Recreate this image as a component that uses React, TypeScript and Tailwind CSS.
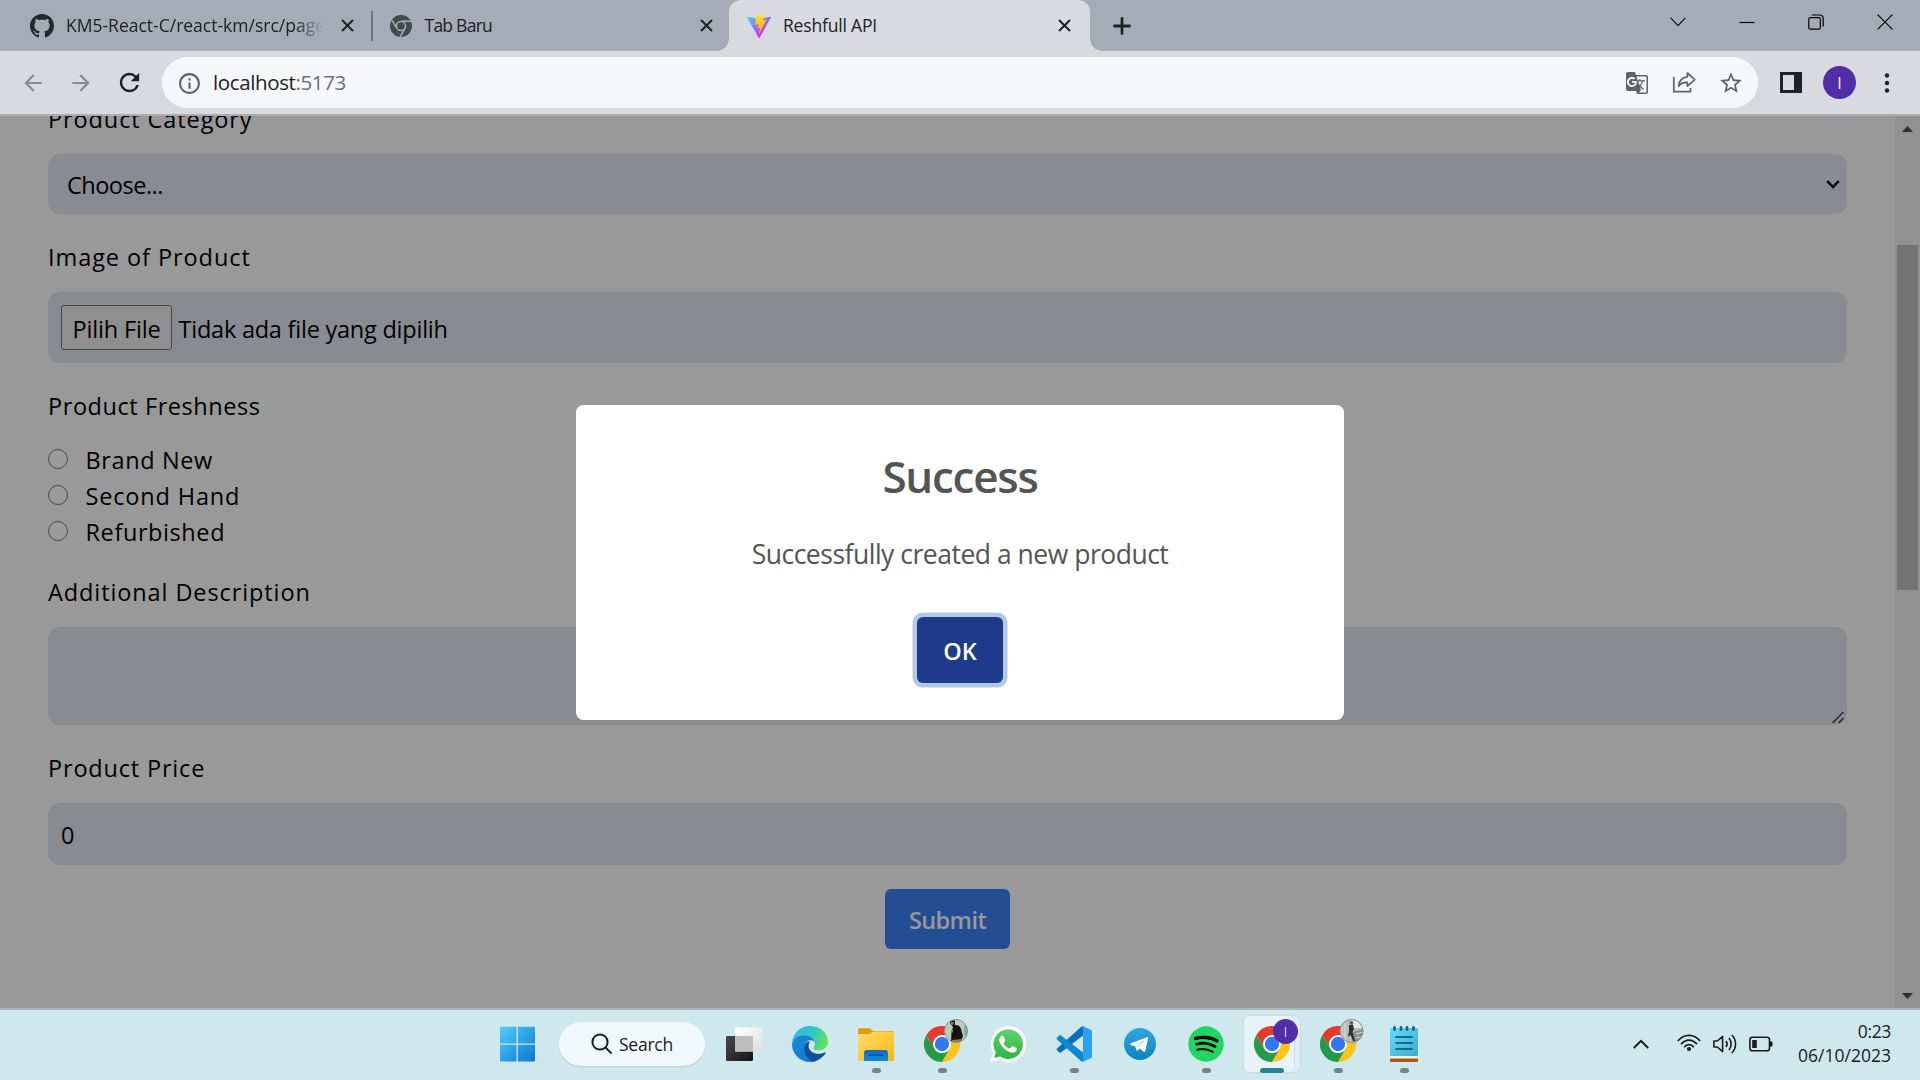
import React from "react";
import { MdArrowBack, MdArrowForward, MdRefresh, MdInfoOutline, MdGTranslate, MdStarOutline } from "react-icons/md";

function GitHubMark() {
  return (
    <svg className="shrink-0" width="24" height="24" viewBox="0 0 16 16" fill="#24292f">
      <path d="M8 0C3.58 0 0 3.58 0 8c0 3.54 2.29 6.53 5.47 7.59.4.07.55-.17.55-.38 0-.19-.01-.82-.01-1.49-2.01.37-2.53-.49-2.69-.94-.09-.23-.48-.94-.82-1.13-.28-.15-.68-.52-.01-.53.63-.01 1.08.58 1.23.82.72 1.21 1.87.87 2.33.66.07-.52.28-.87.51-1.07-1.78-.2-3.64-.89-3.64-3.95 0-.87.31-1.59.82-2.15-.08-.2-.36-1.02.08-2.12 0 0 .67-.21 2.2.82.64-.18 1.32-.27 2-.27s1.36.09 2 .27c1.53-1.04 2.2-.82 2.2-.82.44 1.1.16 1.92.08 2.12.51.56.82 1.27.82 2.15 0 3.07-1.87 3.75-3.65 3.95.29.25.54.73.54 1.48 0 1.07-.01 1.93-.01 2.2 0 .21.15.46.55.38A8.01 8.01 0 0 0 16 8c0-4.42-3.58-8-8-8Z" />
    </svg>
  );
}

function TabClose({ className = "" }: { className?: string }) {
  return (
    <svg className={`shrink-0 ${className}`} width="13" height="13" viewBox="0 0 13 13" fill="none" stroke="#202124" strokeWidth="2.1">
      <path d="M1 1L12 12M12 1L1 12" />
    </svg>
  );
}

function GreyChrome() {
  return (
    <svg className="shrink-0" width="22" height="22" viewBox="0 0 22 22">
      <circle cx="11" cy="11" r="11" fill="#45484d" />
      <circle cx="11" cy="11" r="4.6" fill="none" stroke="#a7abb8" strokeWidth="1.5" />
      <path d="M11 6.2H21M6.9 13.4L1.8 4.9M15.1 13.4L10 22" stroke="#a7abb8" strokeWidth="1.5" />
    </svg>
  );
}

function ViteLogo() {
  return (
    <svg className="shrink-0" width="24" height="24" viewBox="0 0 256 257">
      <defs>
        <linearGradient id="viteA" x1="-.8%" x2="57.6%" y1="7.7%" y2="78.4%">
          <stop offset="0" stopColor="#41D1FF" />
          <stop offset="1" stopColor="#BD34FE" />
        </linearGradient>
        <linearGradient id="viteB" x1="43.4%" x2="50.3%" y1="2.2%" y2="89%">
          <stop offset="0" stopColor="#FFEA83" />
          <stop offset=".083" stopColor="#FFDD35" />
          <stop offset="1" stopColor="#FFA800" />
        </linearGradient>
      </defs>
      <path fill="url(#viteA)" d="M255.153 37.938L134.897 252.976c-2.483 4.44-8.862 4.466-11.382.048L.875 37.958c-2.746-4.814 1.371-10.646 6.827-9.67l120.385 21.517a6.537 6.537 0 0 0 2.322-.004l117.867-21.483c5.438-.991 9.574 4.796 6.877 9.62Z" />
      <path fill="url(#viteB)" d="M185.432.063L96.44 17.501a3.268 3.268 0 0 0-2.634 3.014l-5.474 92.456a3.268 3.268 0 0 0 3.997 3.378l24.777-5.718c2.318-.535 4.413 1.507 3.936 3.838l-7.361 36.047c-.495 2.426 1.782 4.5 4.151 3.78l15.304-4.649c2.372-.72 4.652 1.36 4.15 3.788l-11.698 56.621c-.732 3.542 3.979 5.473 5.943 2.437l1.313-2.028l72.516-144.72c1.215-2.423-.88-5.186-3.54-4.672l-25.505 4.922c-2.396.462-4.435-1.77-3.759-4.114l16.646-57.705c.677-2.35-1.37-4.583-3.769-4.113Z" />
    </svg>
  );
}

function TabStrip() {
  return (
    <div className="flex h-[51px] bg-[#a7abb8] text-[17.5px] text-[#202124]">
      <div className="flex w-[371px] items-center pl-[30px]">
        <GitHubMark />
        <div className="ml-[12px] w-[260px] overflow-hidden whitespace-nowrap [mask-image:linear-gradient(to_right,black_88%,transparent_99%)]">
          KM5-React-C/react-km/src/pages
        </div>
        <TabClose className="ml-[15px]" />
      </div>
      <div className="my-auto h-[30px] w-[1.5px] bg-[#6f737c]" />
      <div className="flex w-[356.5px] items-center pl-[17px]">
        <GreyChrome />
        <div className="ml-[13px] flex-1 tracking-[-0.75px]">Tab Baru</div>
        <TabClose className="mr-[16px]" />
      </div>
      <div className="relative flex w-[360.5px] items-center rounded-t-[12px] bg-[#d9dadf] pl-[18px]">
        <div className="absolute bottom-0 left-[-12px] size-3 bg-[radial-gradient(circle_at_0_0,transparent_11.5px,#d9dadf_12px)]" />
        <div className="absolute right-[-12px] bottom-0 size-3 bg-[radial-gradient(circle_at_100%_0,transparent_11.5px,#d9dadf_12px)]" />
        <ViteLogo />
        <div className="ml-[12px] flex-1 tracking-[-0.18px]">Reshfull API</div>
        <TabClose className="mr-[18.5px]" />
      </div>
      <svg className="my-auto ml-[23.5px]" width="18" height="18" viewBox="0 0 18 18" stroke="#202124" strokeWidth="2.8" strokeLinecap="round">
        <path d="M1.5 9H16.5M9 1.5V16.5" />
      </svg>
      <div className="ml-auto flex h-[43px] items-center gap-[53px] pr-[27px]">
        <svg width="16" height="10" viewBox="0 0 16 10" fill="none" stroke="#111" strokeWidth="1.2">
          <path d="M.7 .8L8 8.6L15.3 .8" />
        </svg>
        <svg width="16" height="16" viewBox="0 0 16 16" stroke="#000" strokeWidth="1.2">
          <path d="M.5 8.5H15.5" />
        </svg>
        <svg width="16" height="16" viewBox="0 0 16 16" fill="none" stroke="#000" strokeWidth="1.2">
          <rect x=".8" y="3.6" width="11.6" height="11.6" rx="1.8" />
          <path d="M3.8 1H11.5C13.8 1 15.2 2.4 15.2 4.6V12.4" />
        </svg>
        <svg width="16" height="16" viewBox="0 0 16 16" stroke="#000" strokeWidth="1.2">
          <path d="M.6 .6L15.4 15.4M15.4 .6L.6 15.4" />
        </svg>
      </div>
    </div>
  );
}

function Toolbar() {
  return (
    <div className="flex h-[65px] items-center border-b-2 border-[#acadb1] bg-[#d9dadf] pl-5">
      <MdArrowBack size={26} className="text-[#8a8b90]" />
      <MdArrowForward size={26} className="ml-[22px] text-[#8a8b90]" />
      <MdRefresh size={29} className="ml-[21px] text-[#202124]" />
      <div className="ml-[18px] flex h-[51px] w-[1596px] items-center rounded-full bg-[#f6f7f9] pl-[15px]">
        <MdInfoOutline size={25} className="mt-0.5 text-[#5f6368]" />
        <div className="ml-[11px] text-[20.5px] tracking-[-0.38px] text-[#202124]">
          localhost<span className="text-[#6b6e73]">:5173</span>
        </div>
        <div className="ml-auto flex items-center pr-[14px] text-[#5f6368]">
          <MdGTranslate size={24} />
          <svg className="ml-[23px]" width="25" height="23" viewBox="0 0 25 23" fill="none" stroke="#5f6368" strokeWidth="1.7">
            <path d="M1.8 6V20.6H18.5V17" />
            <path d="M15.4 2L22.8 8.6L15.4 15.2V11.4C11.5 11.2 8.6 12.4 6.6 15.2C7 10.4 9.6 6.5 15.4 5.8Z" strokeLinejoin="round" />
          </svg>
          <MdStarOutline size={26} className="ml-[21.5px]" />
        </div>
      </div>
      <div className="ml-[22px] h-[21px] w-[22px] border-[3px] border-r-[8px] border-[#202124]" />
      <div className="ml-[21px] flex size-[33px] items-center justify-center rounded-full bg-[#512da8] text-[16px] text-white">I</div>
      <svg className="ml-[28px]" width="6" height="20" viewBox="0 0 6 20" fill="#202124">
        <circle cx="3" cy="2.5" r="2.2" />
        <circle cx="3" cy="10" r="2.2" />
        <circle cx="3" cy="17.5" r="2.2" />
      </svg>
    </div>
  );
}

function Radio({ label, className }: { label: string; className: string }) {
  return (
    <div className="flex h-9">
      <div className="mt-[7px] size-5 rounded-full border-[1.5px] border-[#474747]" />
      <div className={`ml-[17.5px] leading-9 ${className}`}>{label}</div>
    </div>
  );
}

function ProductForm() {
  return (
    <div className="flex flex-1 flex-col px-12 text-[23.5px] text-black">
      <div className="mt-[-15px] leading-9 tracking-[0.9px]">Product Category</div>
      <div className="mt-[17px] flex h-[60px] items-center justify-between rounded-xl bg-[#888b90] pr-[7px] pl-[19px]">
        <span className="pt-[3px] tracking-[-0.5px]">Choose...</span>
        <svg width="14" height="9" viewBox="0 0 14 9" fill="none" stroke="#000" strokeWidth="2.6">
          <path d="M1.2 1.2L7 7L12.8 1.2" />
        </svg>
      </div>
      <div className="mt-[25px] leading-9 tracking-[0.93px]">Image of Product</div>
      <div className="mt-[17px] flex h-[71px] items-center rounded-xl bg-[#888b90] pl-[13px]">
        <span className="flex h-[45px] w-[111px] items-center rounded-[3px] border-[1.5px] border-[#474747] bg-[#8f8f8f] pt-1 pl-[10.5px] tracking-[-0.15px] whitespace-nowrap">
          Pilih File
        </span>
        <span className="ml-[6.5px] pt-1 tracking-[-0.23px]">Tidak ada file yang dipilih</span>
      </div>
      <div className="mt-[25px] leading-9 tracking-[0.57px]">Product Freshness</div>
      <div className="mt-[18px]">
        <Radio label="Brand New" className="tracking-[0.62px]" />
        <Radio label="Second Hand" className="tracking-[0.84px]" />
        <Radio label="Refurbished" className="tracking-[0.59px]" />
      </div>
      <div className="mt-6 leading-9 tracking-[0.9px]">Additional Description</div>
      <div className="mt-[17px] flex h-[98px] items-end justify-end rounded-xl bg-[#888b90] pr-[3px] pb-px">
        <svg width="12" height="13" viewBox="0 0 12 13" stroke="#2b2c2e" strokeWidth="1.7">
          <path d="M.6 12L11.4 1M6.6 12L11.4 7" />
        </svg>
      </div>
      <div className="mt-[25px] leading-9 tracking-[0.82px]">Product Price</div>
      <div className="mt-[17px] flex h-[62px] items-center rounded-xl bg-[#888b90] pt-1 pl-[13px]">0</div>
      <div className="mt-6 flex h-[60px] w-[125px] items-center justify-center self-center rounded-md bg-[#234e94] pt-1 font-semibold tracking-[-0.59px] text-[#999]">
        Submit
      </div>
    </div>
  );
}

function PageScrollbar() {
  return (
    <div className="flex w-[25px] flex-col items-center bg-[#919191]">
      <svg className="mt-[10px] shrink-0" width="11" height="6" viewBox="0 0 11 6" fill="#303030">
        <path d="M0 6L5.5 0L11 6Z" />
      </svg>
      <div className="mt-[113px] h-[345px] w-[21px] bg-[#747474]" />
      <svg className="mt-auto mb-[9px] shrink-0" width="11" height="6" viewBox="0 0 11 6" fill="#303030">
        <path d="M0 0L5.5 6L11 0Z" />
      </svg>
    </div>
  );
}

function SuccessDialog() {
  return (
    <div className="absolute top-[289px] left-[576px] flex h-[315px] w-[768px] flex-col items-center rounded-[7.5px] bg-white text-[#545454]">
      <div className="mt-[41px] text-[44px] leading-[60px] font-semibold tracking-[-1.27px]">Success</div>
      <div className="mt-[28px] text-[26.5px] leading-[40px] tracking-[-0.49px]">Successfully created a new product</div>
      <div className="mt-[43px] flex h-[66px] w-[86px] items-center justify-center rounded-md bg-[#1e3a8a] pt-[3px] text-[23.5px] font-semibold text-white shadow-[0_0_0_4.5px_#b0cae4]">
        OK
      </div>
    </div>
  );
}

function WindowsLogo() {
  return (
    <svg width="36" height="36" viewBox="0 0 36 36">
      <defs>
        <linearGradient id="win" x1="0" y1="0" x2="1" y2="1" gradientUnits="objectBoundingBox">
          <stop offset="0" stopColor="#4fd0fb" />
          <stop offset="1" stopColor="#0b74d4" />
        </linearGradient>
        <clipPath id="winClip">
          <path d="M0 1.7a1 1 0 0 1 1-1H16.5V17.5H0ZM17.8 .7H34a1 1 0 0 1 1 1V17.5H17.8ZM0 18.8H16.5V35.5H1a1 1 0 0 1-1-1ZM17.8 18.8H35V34.5a1 1 0 0 1-1 1H17.8Z" />
        </clipPath>
      </defs>
      <rect width="36" height="36" fill="url(#win)" clipPath="url(#winClip)" />
    </svg>
  );
}

function TaskView() {
  return (
    <svg width="36" height="36" viewBox="0 0 36 36">
      <defs>
        <linearGradient id="tvDark" x1="0" y1="0" x2="1" y2="1">
          <stop offset="0" stopColor="#4a4a4a" />
          <stop offset="1" stopColor="#141414" />
        </linearGradient>
        <linearGradient id="tvLight" x1="0" y1="0" x2="1" y2="1">
          <stop offset="0" stopColor="#ffffff" />
          <stop offset="1" stopColor="#dedede" />
        </linearGradient>
      </defs>
      <rect x="0" y="10" width="27" height="25" rx="1.2" fill="url(#tvDark)" />
      <rect x="9" y="1.5" width="27" height="24" rx="1.2" fill="url(#tvLight)" />
      <rect x="9" y="10" width="18" height="15.5" fill="#bdbdbd" />
    </svg>
  );
}

function Edge() {
  return (
    <svg width="36" height="36" viewBox="0 0 36 36">
      <defs>
        <linearGradient id="edgeTop" x1="0" y1=".3" x2="1" y2=".6">
          <stop offset="0" stopColor="#35b8ee" />
          <stop offset=".5" stopColor="#2fc6c9" />
          <stop offset="1" stopColor="#66e450" />
        </linearGradient>
        <linearGradient id="edgeLeft" x1=".3" y1="0" x2=".6" y2="1">
          <stop offset="0" stopColor="#1a86d0" />
          <stop offset="1" stopColor="#0f7fe0" />
        </linearGradient>
      </defs>
      <path fill="url(#edgeTop)" d="M0 17C1 7 8 0 18 0C28 0 36 7 36 15.5C36 21 32 24.5 27 24.5C23.5 24.5 21.5 23.5 21.5 22C21.5 21 23 20 23 17.5C23 13 18 10 13 10C7 10 2 13 0 17Z" />
      <path fill="url(#edgeLeft)" d="M0 18C1 12 7 9.5 12.5 9.5C18.5 9.5 22.5 13 23 17C21.5 14.5 19 14 17 14.5C12.5 16 12 22 14 27C16 32 20 35 24 35C22 36 20 36 18 36C8 36 0 28 0 18Z" />
      <path fill="#0f4f9c" d="M14.5 16.5C11 20 11.5 30 18 34C20 35.5 22 35.7 24 35C29 33 32 30 33.7 27.3C34 26.5 33.3 26 32.5 26.5C29 28.3 24 28.5 20 26C16.5 23.5 15.5 19.5 18 15.5C16.5 15.2 15.5 15.7 14.5 16.5Z" />
    </svg>
  );
}

function Explorer() {
  return (
    <svg width="36" height="36" viewBox="0 0 36 36">
      <defs>
        <linearGradient id="folder" x1="0" y1="0" x2="1" y2="1">
          <stop offset="0" stopColor="#ffdd72" />
          <stop offset="1" stopColor="#fbb70b" />
        </linearGradient>
        <linearGradient id="folderBlue" x1="0" y1="0" x2="0" y2="1">
          <stop offset="0" stopColor="#0f6cc0" />
          <stop offset="1" stopColor="#1389dc" />
        </linearGradient>
      </defs>
      <path fill="#e2a007" d="M0 3.5A1.3 1.3 0 0 1 1.3 2.2H11.5L15 5H34.8A1.2 1.2 0 0 1 36 6.2V12H0Z" />
      <path fill="url(#folder)" d="M0 8H11.5L15.5 5.5H36V35H0Z" />
      <path fill="url(#folderBlue)" d="M6 35V27A3 3 0 0 1 9 24H27A3 3 0 0 1 30 27V35Z" />
      <path d="M11.5 29.3H24.5" stroke="#0a4a92" strokeWidth="1.5" strokeLinecap="round" />
    </svg>
  );
}

function Chrome() {
  return (
    <svg width="36" height="36" viewBox="0 0 36 36">
      <path fill="#e33b2e" d="M2.4 9A18 18 0 0 1 33.6 9H18L10.2 22.5Z" />
      <path fill="#fcc419" d="M33.6 9A18 18 0 0 1 18 36L25.8 22.5L18 9Z" />
      <path fill="#259a48" d="M18 36A18 18 0 0 1 2.4 9L10.2 22.5A9 9 0 0 0 25.8 22.5Z" />
      <circle cx="18" cy="18" r="9" fill="#fff" />
      <circle cx="18" cy="18" r="7.2" fill="#3079f0" />
    </svg>
  );
}

function WhatsApp() {
  return (
    <svg width="36" height="36" viewBox="0 0 36 36">
      <defs>
        <linearGradient id="wa" x1="0" y1="0" x2="0" y2="1">
          <stop offset="0" stopColor="#61d16b" />
          <stop offset="1" stopColor="#2bb741" />
        </linearGradient>
      </defs>
      <path fill="#fff" d="M.4 36L2.9 26.6A17.9 17.9 0 1 1 9.6 33.5Z" />
      <path fill="url(#wa)" d="M4.3 32L5.8 26.3A14.8 14.8 0 1 1 10 30.5Z" />
      <path fill="#fff" d="M13 9.8C12.2 9.6 11.3 9.7 10.7 10.4C9.5 11.6 8.8 13.3 9.5 15.5C11 20.5 16.5 25.8 21.5 26.5C23.7 26.9 26 25.8 26.6 24.2C26.9 23.3 26.9 22.4 26.5 22.1L22.9 20.3C22.4 20.1 22 20.2 21.6 20.6L20.2 22.3C19.9 22.6 19.5 22.7 19.1 22.5C16.8 21.5 15 19.8 13.8 17.7C13.6 17.3 13.6 17 13.9 16.7L15 15.3C15.2 15 15.2 14.7 15.1 14.3L13.7 10.5C13.6 10.1 13.3 9.9 13 9.8Z" />
    </svg>
  );
}

function VsCode() {
  return (
    <svg width="36" height="36" viewBox="0 0 36 36">
      <path fill="#0a6fb8" d="M1 24.2L3.3 26.5C3.8 27 4.5 27 5 26.6L27 9.5V.8C26.5 .2 25.7 .3 25 .9L1 22.5C.4 23 .5 23.7 1 24.2Z" />
      <path fill="#0f86d3" d="M1 11.8L3.3 9.5C3.8 9 4.5 9 5 9.4L27 26.5V35.2C26.5 35.8 25.7 35.7 25 35.1L1 13.5C.4 13 .5 12.3 1 11.8Z" />
      <path fill="#27a1f1" d="M25.2 35.5C26 36.1 26.6 36.1 27.3 35.8L34.6 32.3C35.5 31.9 36 31.2 36 30.2V5.8C36 4.8 35.5 4.1 34.6 3.7L27.3 .2C26.5-.1 25.8 0 25.2 .5C26.3 .1 27 .9 27 2V34C27 35.1 26.3 35.9 25.2 35.5Z" />
    </svg>
  );
}

function Telegram() {
  return (
    <svg width="36" height="36" viewBox="0 0 36 36">
      <defs>
        <linearGradient id="tg" x1="0" y1="0" x2="0" y2="1">
          <stop offset="0" stopColor="#33a6de" />
          <stop offset="1" stopColor="#0f83c2" />
        </linearGradient>
      </defs>
      <circle cx="18" cy="18" r="16" fill="url(#tg)" />
      <path fill="#fff" d="M8.5 17.6L24.8 11.2C25.6 10.9 26.2 11.4 26 12.4L23.3 25C23.1 25.9 22.5 26.1 21.8 25.7L17.7 22.6L15.5 24.6C15.1 25 14.6 24.9 14.5 24.3L13.3 20.4L8.7 18.9C7.7 18.5 7.7 18 8.5 17.6Z" />
      <path d="M13.8 20.3L22 14.5L16 21" stroke="#b9d7e8" strokeWidth="1" fill="none" />
    </svg>
  );
}

function Spotify() {
  return (
    <svg width="36" height="36" viewBox="0 0 36 36">
      <circle cx="18" cy="18" r="17.7" fill="#1fd660" />
      <g fill="none" stroke="#000" strokeLinecap="round">
        <path d="M7.5 12.4C14 10.5 23 11.2 29 14.7" strokeWidth="3.4" />
        <path d="M8.5 18.2C14 16.5 21.5 17.3 27 20.5" strokeWidth="2.7" />
        <path d="M9.2 23.7C14.5 22.4 20 23 24.8 25.8" strokeWidth="2.1" />
      </g>
    </svg>
  );
}

function Notepad() {
  return (
    <svg width="36" height="36" viewBox="0 0 36 36">
      <defs>
        <linearGradient id="np" x1="0" y1="0" x2="1" y2="1">
          <stop offset="0" stopColor="#66dcf4" />
          <stop offset="1" stopColor="#3eabd0" />
        </linearGradient>
      </defs>
      <rect x="4" y="31" width="28" height="5" rx="1" fill="#b0540f" />
      <rect x="4" y="29" width="28" height="3.5" fill="#efeff2" />
      <rect x="4" y="2" width="28" height="28" rx="1.5" fill="url(#np)" />
      <path d="M8.5 1.4V3.6M15 1.4V3.6M21 1.4V3.6M27.5 1.4V3.6" stroke="#0b6a8c" strokeWidth="2.8" strokeLinecap="round" />
      <path d="M10 11H26M10 17H26M10 23H26" stroke="#0d6d92" strokeWidth="1.8" strokeLinecap="round" />
    </svg>
  );
}

function TaskbarApp({ children, running = false }: { children: React.ReactNode; running?: boolean }) {
  return (
    <div className="flex h-[47px] w-[66px] flex-col items-center justify-between">
      <div className="relative">{children}</div>
      <div className={running ? "h-[5px] w-[9px] rounded-full bg-[#788488]" : "h-[5px]"} />
    </div>
  );
}

function PhotoDark() {
  return (
    <svg className="absolute top-[-7px] left-5" width="24" height="24" viewBox="0 0 24 24">
      <clipPath id="pd"><circle cx="12" cy="12" r="11.5" /></clipPath>
      <g clipPath="url(#pd)">
        <rect width="24" height="24" fill="#b9cdb9" />
        <path fill="#171514" d="M6 4C6 1 10 0 11 2.5L11 6C15 6 17 8 17.5 12L19 17L17 22H7L7.5 13L9 8Z" />
        <path fill="#8f7c68" d="M7 2.5L10 3.5L9 6L7 5ZM7 12L9 10V14ZM8 21L18 20L16 24H9Z" />
        <path fill="#93a896" d="M20 6L24 8V22L20 16Z" />
      </g>
      <circle cx="12" cy="12" r="11.5" fill="none" stroke="#87948f" strokeWidth="1" />
    </svg>
  );
}

function PhotoLight() {
  return (
    <svg className="absolute top-[-7px] left-[19px]" width="25" height="24" viewBox="0 0 25 24">
      <clipPath id="pl"><circle cx="12.5" cy="12" r="11.5" /></clipPath>
      <g clipPath="url(#pl)">
        <rect width="25" height="24" fill="#b7bcbd" />
        <path fill="#e6e9ea" d="M12 0H25V9H14Z" />
        <path fill="#8b9089" d="M14 13L25 10V24H14Z" />
        <path stroke="#d9dcdc" strokeWidth="1" d="M3 4V20M6 3V21M17 15L24 13M17 19L24 18" />
        <path fill="#2e2d36" d="M10 6L14 5.5L15 10L13.5 13L16 22H14L11.5 16L9 18L10 12Z" />
        <circle cx="12.5" cy="3.8" r="1.8" fill="#6e5648" />
      </g>
      <circle cx="12.5" cy="12" r="11.5" fill="none" stroke="#7f8a8c" strokeWidth="1" />
    </svg>
  );
}

function Taskbar() {
  return (
    <div className="flex h-[72px] border-t-2 border-[#a8b9bd] bg-[#cfe8ee] pl-[500px] text-[17.5px] text-[#1a1c1d]">
      <div className="pt-4">
        <WindowsLogo />
      </div>
      <div className="mt-3 ml-[23px] flex h-11 w-[146px] items-center rounded-full bg-[#f0f8fa] pl-[32px] shadow-[0_1.5px_1px_#bcd5db]">
        <svg width="22" height="22" viewBox="0 0 22 22" fill="none" stroke="#1a1c1d" strokeWidth="2">
          <circle cx="9" cy="9" r="7.6" />
          <path d="M14.3 14.3L20.6 20.6" />
        </svg>
        <span className="ml-[6px] tracking-[-0.24px]">Search</span>
      </div>
      <div className="mt-4 ml-[6px] flex">
        <TaskbarApp><TaskView /></TaskbarApp>
        <TaskbarApp><Edge /></TaskbarApp>
        <TaskbarApp running><Explorer /></TaskbarApp>
        <TaskbarApp running>
          <Chrome />
          <PhotoDark />
        </TaskbarApp>
        <TaskbarApp><WhatsApp /></TaskbarApp>
        <TaskbarApp running><VsCode /></TaskbarApp>
        <TaskbarApp><Telegram /></TaskbarApp>
        <TaskbarApp running><Spotify /></TaskbarApp>
        <div className="relative z-0 flex h-[47px] w-[66px] flex-col items-center justify-between">
          <div className="absolute top-[-11px] left-[10px] -z-10 h-[58px] w-[52px] rounded-[6px] border border-[#c3dbe1] bg-[#deeff3]" />
          <div className="absolute top-[-11px] left-[4px] -z-10 h-[58px] w-[52px] rounded-[6px] border border-[#c9dfe4] bg-[#e7f3f7]" />
          <div className="relative">
            <Chrome />
            <div className="absolute top-[-7px] left-[19px] flex size-[25px] items-center justify-center rounded-full bg-[#512da8] text-[14px] text-[#cfc4ea]">I</div>
          </div>
          <div className="h-[5px] w-6 rounded-full bg-[#2a8394]" />
        </div>
        <TaskbarApp running>
          <Chrome />
          <PhotoLight />
        </TaskbarApp>
        <TaskbarApp running><Notepad /></TaskbarApp>
      </div>
      <div className="ml-auto flex items-center pr-[29px] pb-1">
        <svg className="mt-px" width="16" height="10" viewBox="0 0 16 10" fill="none" stroke="#1a1c1d" strokeWidth="2">
          <path d="M.8 9L8 1.8L15.2 9" />
        </svg>
        <svg className="ml-[28px]" width="24" height="18" viewBox="0 0 24 18" fill="none" stroke="#1a1c1d" strokeWidth="1.7">
          <path d="M.8 7C7-.6 17-.6 23.2 7M4 10.3C8.5 4.6 15.5 4.6 20 10.3M7.2 13.3C9.8 9.6 14.2 9.6 16.8 13.3" />
          <circle cx="12" cy="15" r="2.1" fill="#1a1c1d" stroke="none" />
        </svg>
        <svg className="mt-0.5 ml-[12px]" width="24" height="20" viewBox="0 0 24 20" fill="none" stroke="#1a1c1d" strokeWidth="1.6">
          <path d="M.9 7V13H4.3L9.6 17.6V2.4L4.3 7Z" strokeLinejoin="round" />
          <path d="M13 7C14.3 8.8 14.3 11.2 13 13M16 4C18.8 7.5 18.8 12.5 16 16M18.8 1C23.8 6 23.8 14 18.8 19" />
        </svg>
        <svg className="mt-0.5 ml-[12px]" width="24" height="16" viewBox="0 0 24 16" fill="none" stroke="#1a1c1d" strokeWidth="1.6">
          <rect x=".9" y="1.2" width="19.6" height="13.6" rx="2.6" />
          <rect x="3.2" y="4" width="4.6" height="8" fill="#1a1c1d" stroke="none" />
          <path d="M21 5.5H22.5A1 1 0 0 1 23.5 6.5V9.5A1 1 0 0 1 22.5 10.5H21Z" fill="#1a1c1d" stroke="none" />
        </svg>
        <div className="ml-[25px] text-right leading-6">
          <div className="tracking-[-0.37px]">0:23</div>
          <div>06/10/2023</div>
        </div>
      </div>
    </div>
  );
}

export default function App() {
  return (
    <div className="flex h-[1080px] w-[1920px] flex-col overflow-hidden font-['Open_Sans',sans-serif]">
      <TabStrip />
      <Toolbar />
      <div className="relative flex h-[892px] overflow-hidden bg-[#999]">
        <ProductForm />
        <PageScrollbar />
        <SuccessDialog />
      </div>
      <Taskbar />
    </div>
  );
}
